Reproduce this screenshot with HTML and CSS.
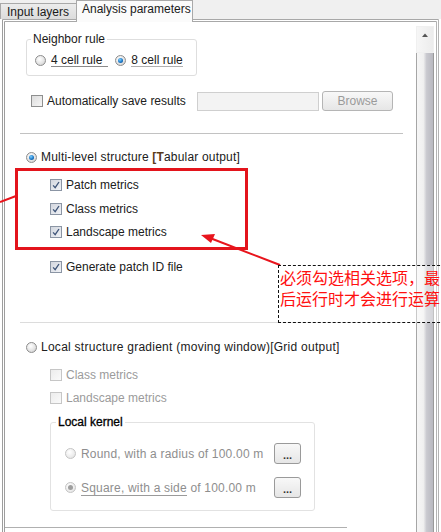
FILE: index.html
```html
<!DOCTYPE html>
<html>
<head>
<meta charset="utf-8">
<link rel="stylesheet" href="styles.css">
</head>
<body>
<div class="tabs">
  <div class="tab tab-off">Input layers</div>
  <div class="tab tab-on">Analysis parameters</div>
  <div class="tab-fill"></div>
</div>
<div class="panel">
  <div class="content">
    <fieldset class="group nbr">
      <legend>Neighbor rule</legend>
      <div class="hrow">
        <span class="radio"></span><span class="lbl u1">4 cell rule</span>
        <span class="radio on r8"></span><span class="lbl u2">8 cell rule</span>
      </div>
    </fieldset>

    <div class="row auto">
      <span class="check"></span><span class="lbl autolbl">Automatically save results</span>
      <span class="field"></span>
      <span class="btn browse">Browse</span>
    </div>

    <div class="rule r1"></div>

    <div class="row multi">
      <span class="radio on"></span><span class="lbl wide">Multi-level structure <b>[T</b>abular output]</span>
    </div>

    <div class="row sub patch"><span class="check on"><svg viewBox="0 0 12 12"><path d="M2.5 6.5 L5 9.2 L9.6 2.4"/></svg></span><span class="lbl">Patch metrics</span></div>
    <div class="row sub cls"><span class="check on"><svg viewBox="0 0 12 12"><path d="M2.5 6.5 L5 9.2 L9.6 2.4"/></svg></span><span class="lbl">Class metrics</span></div>
    <div class="row sub land"><span class="check on"><svg viewBox="0 0 12 12"><path d="M2.5 6.5 L5 9.2 L9.6 2.4"/></svg></span><span class="lbl">Landscape metrics</span></div>
    <div class="row sub gen"><span class="check on"><svg viewBox="0 0 12 12"><path d="M2.5 6.5 L5 9.2 L9.6 2.4"/></svg></span><span class="lbl">Generate patch ID file</span></div>

    <div class="rule r2"></div>

    <div class="row local">
      <span class="radio"></span><span class="lbl wider">Local structure gradient (moving window)[Grid output]</span>
    </div>
    <div class="row sub dis dcls"><span class="check off"></span><span class="lbl">Class metrics</span></div>
    <div class="row sub dis dland"><span class="check off"></span><span class="lbl">Landscape metrics</span></div>

    <fieldset class="group kernel">
      <legend>Local kernel</legend>
      <div class="krow">
        <span class="radio off"></span><span class="lbl klbl">Round, with a radius of 100.00 m</span>
        <span class="btn dots">...</span>
      </div>
      <div class="krow k2">
        <span class="radio off on-grey"></span><span class="lbl klbl"><span class="u3">Square, with a side</span> of 100.00 m</span>
        <span class="btn dots">...</span>
      </div>
    </fieldset>

    <div class="foot"></div>

    <div class="redbox"></div>
  </div>
  <div class="scroll">
    <div class="sb-up"><svg viewBox="0 0 16 27"><path d="M5 10 L8 6.5 L11 10 Z"/></svg></div>
    <div class="sb-thumb"></div>
  </div>
</div>

<svg class="arrows" viewBox="0 0 441 532" width="441" height="532">
  <line x1="0" y1="202" x2="16" y2="196" />
  <line x1="280" y1="265" x2="210" y2="238" />
  <path class="head" d="M201 235 L215 234 L211 243 Z"/>
</svg>

<div class="note">必须勾选相关选项，最后运行时才会进行运算</div>
</body>
</html>
```

FILE: styles.css
```css
* { box-sizing: border-box; }
html, body {
  margin: 0;
  padding: 0;
  width: 441px;
  height: 532px;
  overflow: hidden;
  background: #ffffff;
  font-family: "Liberation Sans", Arial, sans-serif;
  font-size: 12px;
  color: #202020;
}
body { position: relative; }

/* tabs */
.tabs {
  display: flex;
  align-items: flex-end;
  height: 19px;
  background: #f0f0f0;
}
.tab {
  font-size: 12px;
  line-height: 14px;
  white-space: nowrap;
  border: 1px solid #a9a9a9;
  border-bottom: none;
}
.tab-off {
  width: 77px;
  height: 16px;
  padding: 1px 0 0 6px;
  background: linear-gradient(#ececec, #dcdcdc);
  color: #1a1a1a;
}
.tab-on {
  width: 117px;
  height: 22px;
  margin-bottom: -3px;
  margin-left: -1px;
  padding: 1px 0 0 5px;
  background: #fbfbfb;
  position: relative;
  z-index: 1;
  color: #1a1a1a;
}
.tab-fill { flex: 1; }

/* panel */
.panel {
  margin-left: 2px;
  width: 437px;
  height: 513px;
  border-top: 3px double #a8a8a8;
  border-left: 3px double #9d9d9d;
  border-right: 3px double #b4b4b4;
  display: flex;
  background: #fff;
}
.content {
  flex: 0 0 411px;
  position: relative;
  padding-top: 10px;
}

/* group boxes */
.group {
  margin: 0;
  border: 1px solid #dedede;
  border-radius: 3px;
  padding: 0;
}
.group legend {
  padding: 0 2px;
  line-height: 14px;
  font-size: 12px;
  color: #1a1a1a;
}
.nbr {
  margin-left: 21px;
  width: 171px;
  padding: 7px 0 8px 8px;
}
.nbr legend { margin-left: -4px; }
.hrow {
  display: flex;
  align-items: center;
  height: 14px;
}

/* controls */
.radio {
  display: inline-block;
  flex: 0 0 11px;
  width: 11px;
  height: 11px;
  border-radius: 50%;
  border: 1px solid #8d8d8d;
  background: radial-gradient(circle at 40% 35%, #ffffff 0%, #e4e4e4 55%, #c4c4c4 100%);
  position: relative;
}
.radio.on::after {
  content: "";
  position: absolute;
  left: 2px; top: 2px;
  width: 5px; height: 5px;
  border-radius: 50%;
  background: radial-gradient(circle at 40% 35%, #7fd0ff 0%, #1a78c8 55%, #0b3f78 100%);
}
.radio.off {
  border-color: #c4c4c4;
  background: radial-gradient(circle at 40% 35%, #ffffff 0%, #ececec 60%, #d8d8d8 100%);
}
.radio.on-grey::after {
  content: "";
  position: absolute;
  left: 2px; top: 2px;
  width: 5px; height: 5px;
  border-radius: 50%;
  background: #9e9e9e;
}
.lbl { white-space: nowrap; line-height: 14px; }
.hrow .lbl { margin-left: 5px; }
.r8 { margin-left: 7px; }
.u1 { padding-right: 6px; border-bottom: 1px solid #8a8a8a; line-height: 12px; }
.u2 { border-bottom: 1px solid #b0b0b0; line-height: 12px; }

.check {
  display: inline-block;
  flex: 0 0 12px;
  width: 12px;
  height: 12px;
  border: 1px solid #8e8f8f;
  background: linear-gradient(135deg, #dcdcdc, #f6f6f6);
}
.check.on { background: linear-gradient(135deg, #d2d6de, #f0f2f6); border-color: #8b95a4; }
.check.on svg { display: block; width: 10px; height: 10px; }
.check.on path { fill: none; stroke: #3e5478; stroke-width: 1.6; }
.check.off { border-color: #c6c6c6; background: linear-gradient(135deg, #ececec, #fafafa); }

.row {
  display: flex;
  align-items: center;
}
.row .lbl { margin-left: 4px; }
.wide { letter-spacing: 0.18px; }
.wider { letter-spacing: 0.26px; }

.auto { margin-top: 15px; height: 20px; padding-left: 26px; }
.autolbl { width: 150px; }
.field {
  width: 122px;
  height: 19px;
  border: 1px solid #cfcfcf;
  background: #f3f3f3;
}
.btn {
  display: inline-flex;
  align-items: center;
  justify-content: center;
  border: 1px solid #b5b5b5;
  border-radius: 3px;
  background: linear-gradient(#f8f8f8, #e6e6e6);
  color: #9a9a9a;
}
.browse { margin-left: 3px; width: 71px; height: 20px; font-size: 12px; }

.rule { margin-left: 15px; width: 383px; height: 1px; }
.r1 { margin-top: 22px; background: #c2c2c2; }
.r2 { margin-top: 47px; background: #dcdcdc; }

.multi { margin-top: 16px; height: 14px; padding-left: 21px; }
.multi b { font-weight: bold; color: #5a3a1a; }
.sub { height: 16px; padding-left: 45px; }
.patch { margin-top: 13px; }
.cls { margin-top: 8px; }
.land { margin-top: 7px; }
.gen { margin-top: 19px; }

.local { margin-top: 17px; height: 14px; padding-left: 21px; }
.dis .lbl { color: #9b9b9b; }
.dcls { margin-top: 13px; }
.dland { margin-top: 7px; }

.kernel {
  margin-top: 9px;
  margin-left: 45px;
  width: 265px;
  padding: 14px 0 12px 14px;
  border-color: #e2e2e2;
}
.kernel legend { margin-left: -9px; color: #000; font-size: 12px; -webkit-text-stroke: 0.3px #000; }
.krow { display: flex; align-items: center; height: 21px; }
.k2 { margin-top: 13px; }
.klbl { color: #8e8e8e; margin-left: 5px; width: 193px; letter-spacing: 0.2px; }
.u3 { border-bottom: 1px solid #9a9a9a; line-height: 12px; }
.dots {
  width: 27px;
  height: 21px;
  color: #333;
  font-weight: bold;
  font-size: 11px;
  line-height: 8px;
  padding-top: 3px;
  border-color: #9a9a9a;
}

.foot { margin-top: 16px; width: 342px; height: 1px; background: #b0b0b0; }

/* red annotation frame */
.redbox {
  position: absolute;
  left: 10px;
  top: 146px;
  width: 233px;
  height: 82px;
  border: 3px solid #e3141c;
}

/* scrollbar */
.scroll {
  flex: 0 0 16px;
  margin-top: 4px;
  display: flex;
  flex-direction: column;
}
.sb-up {
  height: 27px;
  background: linear-gradient(90deg, #f6f6f6, #ececec);
  border: 1px solid #f0f0f0;
}
.sb-up svg { display: block; width: 16px; height: 27px; }
.sb-up path { fill: #555; }
.sb-thumb {
  flex: 1;
  border-left: 1px solid #a6a6a6;
  border-right: 1px solid #9a9a9a;
  background: linear-gradient(90deg, #f6f6f6 0%, #f0f0f0 40%, #c9c9cf 60%, #b9b9c0 100%);
}

/* arrows overlay */
.arrows {
  position: absolute;
  left: 0;
  top: 0;
  pointer-events: none;
}
.arrows line { stroke: #e8141c; stroke-width: 2; }
.arrows .head { fill: #e8141c; }

/* dashed note */
.note {
  position: absolute;
  left: 278px;
  top: 265px;
  width: 172px;
  height: 58px;
  border: 1px dashed #111;
  padding: 1px 0 0 1px;
  font-family: "Noto Sans CJK SC", sans-serif;
  font-size: 16px;
  line-height: 21px;
  color: #ff1010;
  background: rgba(255,255,255,0.4);
  word-break: break-all;
}
```
